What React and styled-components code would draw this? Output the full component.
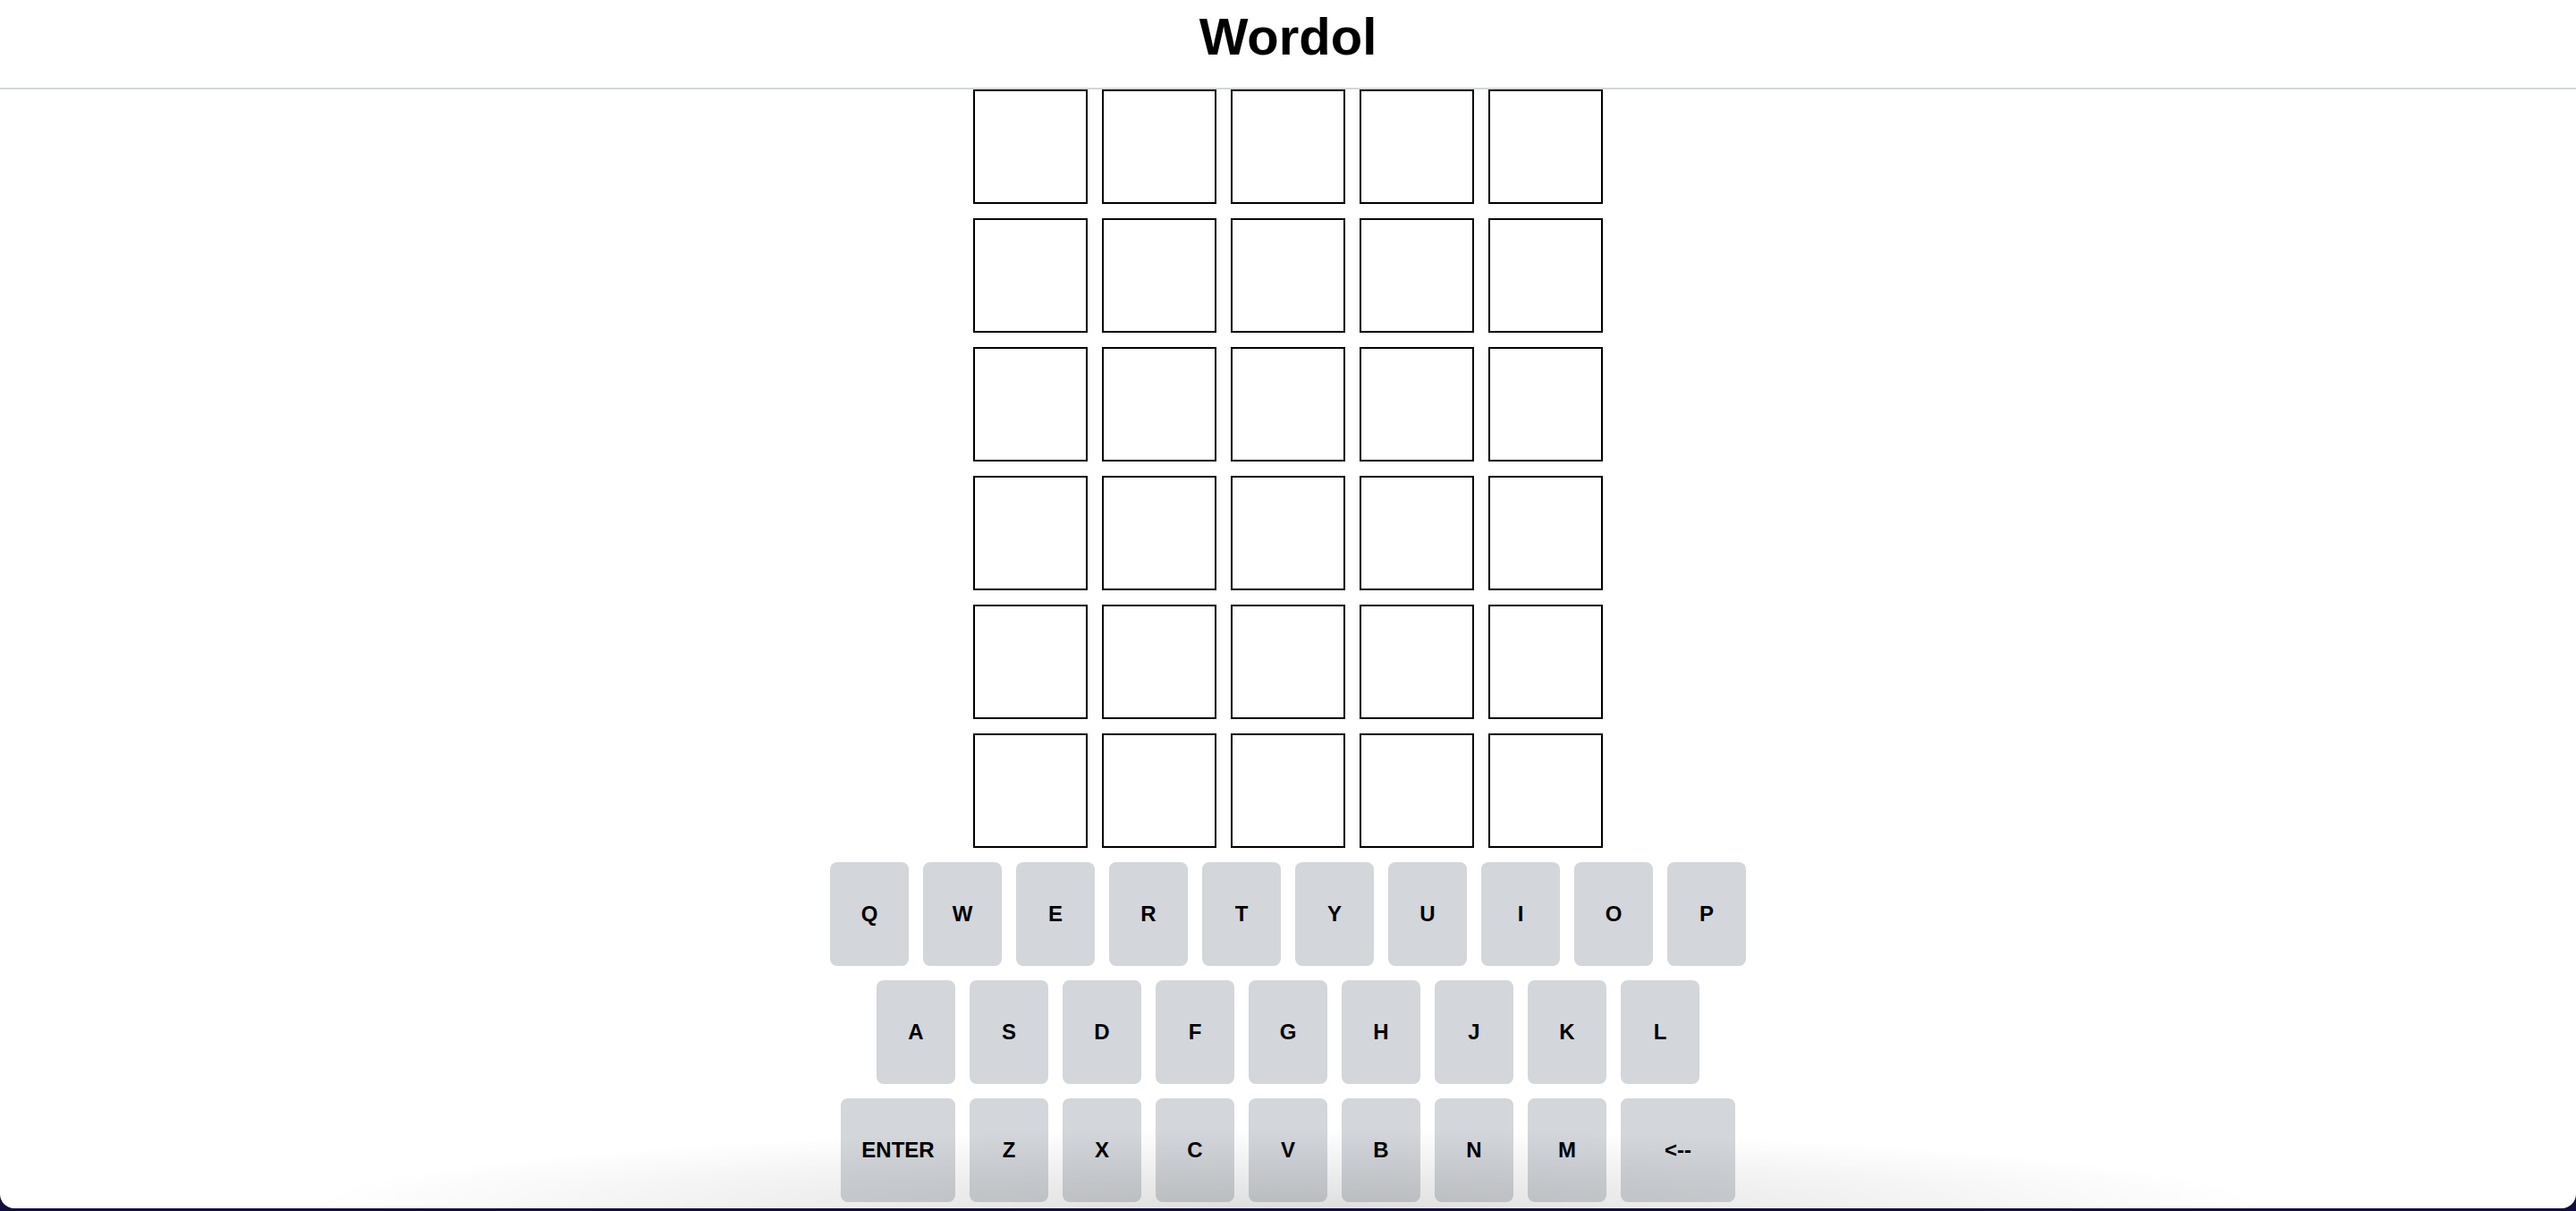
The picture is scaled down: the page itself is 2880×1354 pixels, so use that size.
import React from 'react'
import styled, { createGlobalStyle } from 'styled-components'

const GlobalStyle = createGlobalStyle`
  html, body {
    margin: 0;
    padding: 0;
    background: #120d3d;
  }
  body {
    font-family: "Liberation Sans", Arial, Helvetica, sans-serif;
  }
`

const Window = styled.div`
  position: relative;
  height: 1351px;
  background: #ffffff;
  border-radius: 0 0 16px 16px;
  overflow: hidden;
  display: flex;
  flex-direction: column;
  align-items: center;
`

const Header = styled.header`
  box-sizing: border-box;
  width: 100%;
  height: 100px;
  padding-top: 12px;
  border-bottom: 2px solid #d3d6da;
  display: flex;
  justify-content: center;
  h1 {
    margin: 0;
    font-size: 58px;
    line-height: 58px;
    font-weight: 700;
    color: #000;
  }
`

const Board = styled.div`
  display: grid;
  grid-template-columns: repeat(5, 128px);
  grid-auto-rows: 128px;
  gap: 16px;
`

const Tile = styled.div`
  box-sizing: border-box;
  border: 2px solid #000;
  background: #fff;
`

const Keyboard = styled.div`
  margin-top: 16px;
  display: flex;
  flex-direction: column;
  align-items: center;
  gap: 16px;
`

const KeyRow = styled.div`
  display: flex;
  gap: 16px;
`

const Key = styled.button`
  width: ${({ $wide }) => ($wide ? '128px' : '88px')};
  height: 116px;
  border: none;
  border-radius: 8px;
  background: #d3d6da;
  color: #000;
  font-family: inherit;
  font-size: 24px;
  font-weight: 700;
  padding: 0;
  display: flex;
  align-items: center;
  justify-content: center;
`

const BottomShade = styled.div`
  position: absolute;
  left: 0;
  right: 0;
  bottom: 0;
  height: 100px;
  pointer-events: none;
  background: radial-gradient(
    ellipse 1100px 90px at 50% 100%,
    rgba(0, 0, 0, 0.13),
    rgba(0, 0, 0, 0.05) 60%,
    rgba(0, 0, 0, 0) 100%
  );
`

const rows = [
  ['Q', 'W', 'E', 'R', 'T', 'Y', 'U', 'I', 'O', 'P'],
  ['A', 'S', 'D', 'F', 'G', 'H', 'J', 'K', 'L'],
  ['ENTER', 'Z', 'X', 'C', 'V', 'B', 'N', 'M', '<--'],
]

export default function App() {
  return (
    <>
      <GlobalStyle />
      <Window>
        <Header>
          <h1>Wordol</h1>
        </Header>
        <Board>
          {Array.from({ length: 30 }).map((_, i) => (
            <Tile key={i} />
          ))}
        </Board>
        <Keyboard>
          {rows.map((row, r) => (
            <KeyRow key={r}>
              {row.map((k) => (
                <Key key={k} $wide={k.length > 1}>
                  {k}
                </Key>
              ))}
            </KeyRow>
          ))}
        </Keyboard>
        <BottomShade />
      </Window>
    </>
  )
}
